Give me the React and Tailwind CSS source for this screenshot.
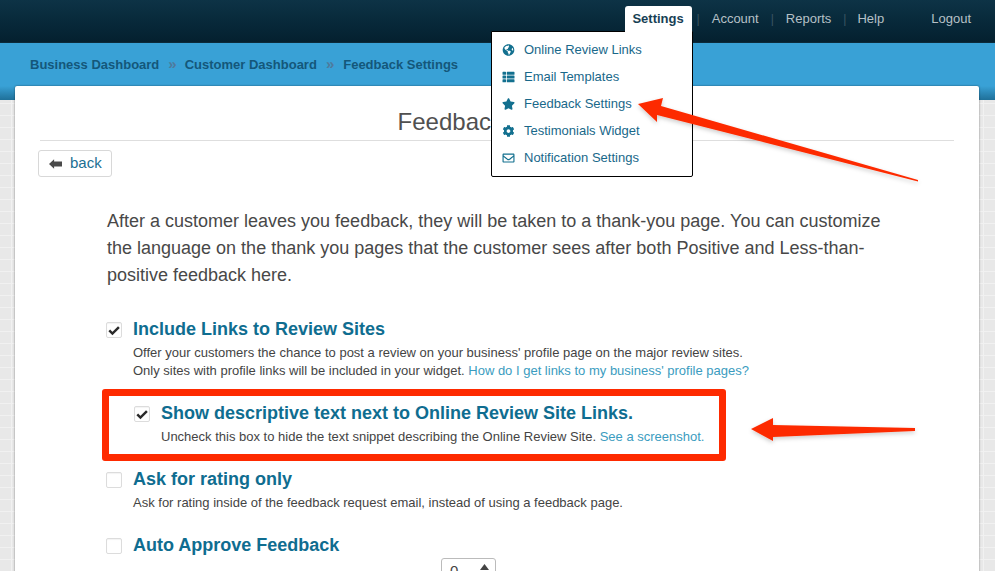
import React from "react";
import { FaGlobeAmericas, FaThList, FaStar, FaCog, FaRegEnvelope } from "react-icons/fa";

const menu = [
  [FaGlobeAmericas, "Online Review Links"],
  [FaThList, "Email Templates"],
  [FaStar, "Feedback Settings"],
  [FaCog, "Testimonials Widget"],
  [FaRegEnvelope, "Notification Settings"],
];

function Box({ checked }) {
  return (
    <span className="flex h-[16px] w-[16px] shrink-0 items-center justify-center rounded-[2px] border border-[#dcdcdc] bg-white shadow-[inset_0_1px_1px_rgba(0,0,0,0.05)]">
      {checked && (
        <svg viewBox="0 0 16 16" className="h-[14px] w-[14px]">
          <path d="M2.6 8.4 L6.2 12 L13.6 4.6" fill="none" stroke="#2a2a2a" strokeWidth="2.8" />
        </svg>
      )}
    </span>
  );
}

function Option({ checked, title, children, className = "" }) {
  return (
    <div className={`flex gap-[11px] ${className}`}>
      <div className="pt-[5px]"><Box checked={checked} /></div>
      <div>
        <h3 className="text-[18px] font-bold leading-[24px] text-[#0f6d90]">{title}</h3>
        {children && <div className="mt-[3px] text-[13px] leading-[18px] text-[#444]">{children}</div>}
      </div>
    </div>
  );
}

const A = ({ children }) => <a className="text-[#3b9cc0]">{children}</a>;
const Sep = () => <span className="text-[12px] text-[#3a5563]">|</span>;

export default function App() {
  return (
    <div className="relative h-[571px] w-[995px] overflow-hidden bg-[#e8e8e8] bg-[repeating-linear-gradient(0deg,transparent_0_11px,#f1f1f1_11px_12px),repeating-linear-gradient(90deg,transparent_0_11px,#f1f1f1_11px_12px)] font-['Liberation_Sans',Arial,sans-serif]">
      <header className="relative flex h-[43px] items-start justify-end border-b border-[#0c2a3a] bg-gradient-to-b from-[#0d3346] to-[#04202f] pr-[24px] pt-[6px] text-[13px]">
        <span className="z-10 flex h-[25px] w-[67px] items-center justify-center rounded-t-[3px] bg-white font-bold text-[#173f55]">Settings</span>
        <nav className="flex h-[25px] items-center text-[#b6c0c6]">
          <span className="ml-[5px]"><Sep /></span>
          <span className="ml-[12px]">Account</span>
          <span className="ml-[12px]"><Sep /></span>
          <span className="ml-[12px]">Reports</span>
          <span className="ml-[12px]"><Sep /></span>
          <span className="ml-[11px]">Help</span>
          <span className="ml-[47px]">Logout</span>
        </nav>
      </header>

      <div className="h-[43px] bg-[#39a1d6] pl-[30px] pt-[14px] text-[13px] font-bold leading-[16px] text-[#14577a]">
        <span>Business Dashboard</span>
        <span className="ml-[9px] mr-[8px] text-[15px] leading-[14px] text-[#4f7a9c]">»</span>
        <span>Customer Dashboard</span>
        <span className="mx-[9px] text-[15px] leading-[14px] text-[#4f7a9c]">»</span>
        <span>Feedback Settings</span>
      </div>
      <div className="h-[14px] bg-gradient-to-b from-[#39a1d6] to-[#1f7099]" />

      <main className="absolute left-[15px] top-[86px] h-[500px] w-[964px] rounded-t-[2px] bg-white shadow-[0_0_2px_rgba(0,0,0,0.55)]">
        <div className="mx-[25px] h-[55px] border-b border-[#dedede] pt-[19px] text-center text-[24px] leading-[34px] text-[#505050]">
          Feedback Settings
        </div>
        <a className="ml-[23px] mt-[9px] flex h-[27px] w-[74px] items-center gap-[8px] rounded-[3px] border border-[#d8d8d8] pl-[10px] text-[15px] text-[#1c6f93]">
          <svg viewBox="0 0 14 10" className="h-[10px] w-[13px]"><path d="M0 5 L5.5 0 V2.2 H14 V7.8 H5.5 V10 Z" fill="#4a4a4a" /></svg>
          back
        </a>
        <p className="ml-[92px] mt-[31px] w-[790px] text-[18px] leading-[27px] text-[#484848]">
          After a customer leaves you feedback, they will be taken to a thank-you page. You can customize the language on the thank you pages that the customer sees after both Positive and Less-than-positive feedback here.
        </p>

        <Option checked title="Include Links to Review Sites" className="ml-[91px] mt-[28px]">
          Offer your customers the chance to post a review on your business' profile page on the major review sites.
          <br />
          Only sites with profile links will be included in your widget. <A>How do I get links to my business' profile pages?</A>
        </Option>

        <div className="ml-[87px] mt-[9px] h-[72px] w-[624px] rounded-[3px] border-[7px] border-[#fe2a00] pl-[25px] pt-[5px]">
          <Option checked title="Show descriptive text next to Online Review Site Links.">
            Uncheck this box to hide the text snippet describing the Online Review Site. <A>See a screenshot.</A>
          </Option>
        </div>

        <Option title="Ask for rating only" className="ml-[91px] mt-[6px]">
          Ask for rating inside of the feedback request email, instead of using a feedback page.
        </Option>
        <Option title="Auto Approve Feedback" className="ml-[91px] mt-[21px]" />
        <div className="ml-[426px] mt-[1px] flex h-[24px] w-[55px] justify-between rounded-[3px] border border-[#bbb] pl-[8px] pr-[6px] pt-[1px] text-[15px] text-[#444]">
          <span>0</span>
          <svg viewBox="0 0 12 8" className="mt-[4px] h-[6px] w-[9px]"><path d="M0 8 L6 0 L12 8 Z" fill="#444" /></svg>
        </div>
      </main>

      <div className="absolute left-[491px] top-[31px] h-[146px] w-[202px] rounded-b-[2px] border border-black bg-white py-[4px] text-[13px] text-[#19688a]">
        {menu.map(([Icon, label]) => (
          <div key={label} className="flex h-[27px] items-center">
            <span className="flex w-[32px] justify-center"><Icon className="h-[12px] w-[13px] text-[#13708f]" /></span>
            <span>{label}</span>
          </div>
        ))}
      </div>
      <div className="absolute left-[625px] top-[30px] h-[3px] w-[67px] bg-white" />

      <svg className="pointer-events-none absolute left-0 top-0" width="995" height="571">
        <defs>
          <filter id="s" x="-10%" y="-30%" width="120%" height="160%">
            <feDropShadow dx="0" dy="2" stdDeviation="2" floodColor="#000" floodOpacity="0.2" />
          </filter>
        </defs>
        <path d="M638 104 L663 98 L661 106 L918 180 L918 181.5 L657 115 L657 122 Z" fill="#fd2c00" filter="url(#s)" />
        <path d="M751 429 L773 418 L773 425 L915 428 L915 431 L773 437 L773 441 Z" fill="#fd2c00" filter="url(#s)" />
      </svg>
    </div>
  );
}
